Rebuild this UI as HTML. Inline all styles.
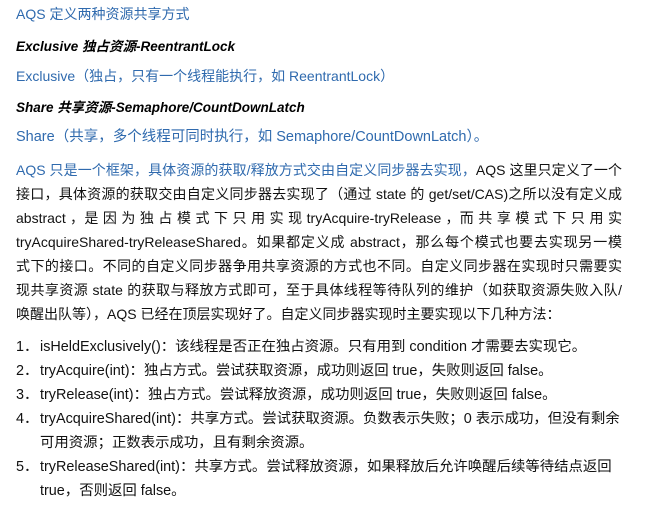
<!DOCTYPE html>
<html><head><meta charset="utf-8"><style>
body{margin:0;width:648px;height:510px;background:#fff;font-family:"Liberation Sans","Noto Sans CJK SC",sans-serif;font-size:14px;color:#111;overflow:hidden;position:relative}
.l{position:absolute;left:16px;white-space:nowrap;line-height:20px}
.b{color:#2f6aae}
.h{font-weight:bold;font-style:italic;font-size:13.5px;color:#000}
.j{width:606px;text-align:justify;text-align-last:justify;white-space:normal;height:20px;overflow:hidden}
.n{position:absolute;left:16px;line-height:20px;white-space:nowrap;font-size:14.4px}
.n span{position:absolute;left:24px}
</style></head><body>
<div class="l b" style="top:4px">AQS 定义两种资源共享方式</div>
<div class="l h" style="top:37px">Exclusive 独占资源-ReentrantLock</div>
<div class="l b" style="top:66px">Exclusive（独占，只有一个线程能执行，如 ReentrantLock）</div>
<div class="l h" style="top:98px">Share 共享资源-Semaphore/CountDownLatch</div>
<div class="l b" style="top:127px;font-size:14.5px">Share（共享，多个线程可同时执行，如 Semaphore/CountDownLatch）。</div>
<div class="l j" style="top:160px"><span class="b">AQS 只是一个框架，具体资源的获取/释放方式交由自定义同步器去实现，</span>AQS 这里只定义了一个</div>
<div class="l j" style="top:184px">接口，具体资源的获取交由自定义同步器去实现了（通过 state 的 get/set/CAS)之所以没有定义成</div>
<div class="l j" style="top:208px">abstract ，是 因 为 独 占 模 式 下 只 用 实 现 tryAcquire-tryRelease ，而 共 享 模 式 下 只 用 实 现</div>
<div class="l j" style="top:232px">tryAcquireShared-tryReleaseShared。如果都定义成 abstract，那么每个模式也要去实现另一模</div>
<div class="l j" style="top:256px">式下的接口。不同的自定义同步器争用共享资源的方式也不同。自定义同步器在实现时只需要实</div>
<div class="l j" style="top:280px">现共享资源 state 的获取与释放方式即可，至于具体线程等待队列的维护（如获取资源失败入队/</div>
<div class="l" style="top:304px">唤醒出队等），AQS 已经在顶层实现好了。自定义同步器实现时主要实现以下几种方法：</div>
<div class="n" style="top:337px">1．<span>isHeldExclusively()：该线程是否正在独占资源。只有用到 condition 才需要去实现它。</span></div>
<div class="n" style="top:361px">2．<span>tryAcquire(int)：独占方式。尝试获取资源，成功则返回 true，失败则返回 false。</span></div>
<div class="n" style="top:385px">3．<span>tryRelease(int)：独占方式。尝试释放资源，成功则返回 true，失败则返回 false。</span></div>
<div class="n" style="top:409px">4．<span>tryAcquireShared(int)：共享方式。尝试获取资源。负数表示失败；0 表示成功，但没有剩余</span></div>
<div class="n" style="top:433px"><span>可用资源；正数表示成功，且有剩余资源。</span></div>
<div class="n" style="top:457px">5．<span>tryReleaseShared(int)：共享方式。尝试释放资源，如果释放后允许唤醒后续等待结点返回</span></div>
<div class="n" style="top:481px"><span>true，否则返回 false。</span></div>
</body></html>
